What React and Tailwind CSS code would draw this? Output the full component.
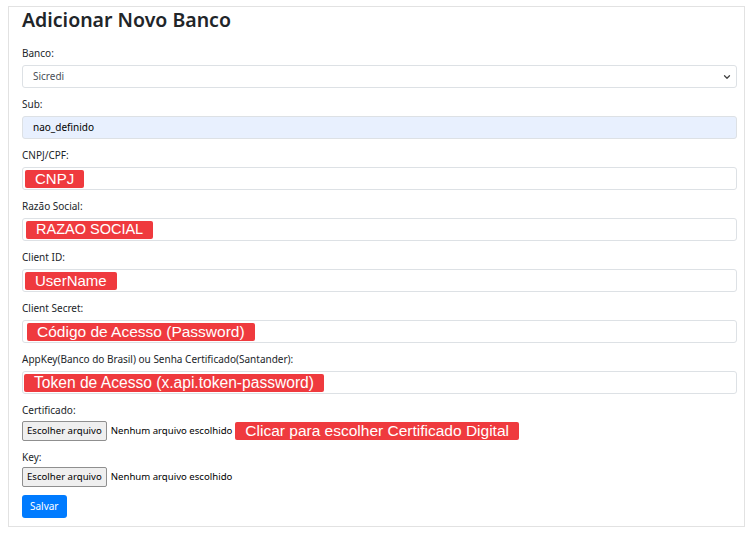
import { ChevronDown } from 'lucide-react';

// Formulário "Adicionar Novo Banco" com anotações em vermelho por cima dos campos
const fields = [
    { label: 'CNPJ/CPF:', note: 'CNPJ', cls: 'ml-[1px] text-[15px]' },
    { label: 'Razão Social:', note: 'RAZAO SOCIAL', cls: 'ml-[2px] text-[14.5px]' },
    { label: 'Client ID:', note: 'UserName', cls: 'ml-[1px] text-[15px]' },
    { label: 'Client Secret:', note: 'Código de Acesso (Password)', cls: 'ml-[3px] text-[15.5px]' },
    { label: 'AppKey(Banco do Brasil) ou Senha Certificado(Santander):', note: 'Token de Acesso (x.api.token-password)', cls: 'ml-0 text-[15.6px]' },
];

function Label({ children, className = 'mb-[4px]' }) {
    return <div className={`h-[16px] text-[10px] leading-[16px] text-[#212529] ${className}`}>{children}</div>;
}

function Note({ children, className = '' }) {
    return (
        <span
            className={`inline-flex items-center h-[18px] px-[10px] rounded-[2px] bg-[#ef3a3e] text-white leading-none whitespace-nowrap ${className}`}
            style={{ fontFamily: "'Liberation Sans', Arial, sans-serif" }}
        >
            {children}
        </span>
    );
}

function FilePicker({ children, className = 'mb-[8px]' }) {
    return (
        <div className={`flex items-center h-[20px] ${className}`}>
            <button className="h-[20px] px-[4px] border border-[#8f8f8f] rounded-[2px] bg-[#efefef] text-[9.6px] text-black leading-none">
                Escolher arquivo
            </button>
            <span className="ml-[4px] text-[9.6px] text-black">Nenhum arquivo escolhido</span>
            {children}
        </div>
    );
}

export default function App() {
    return (
        <div className="w-[753px] h-[535px] bg-white pt-[6px] pl-[8px]" style={{ fontFamily: "'Noto Sans', 'Open Sans', sans-serif" }}>
            <div className="w-[737px] h-[521px] border border-[#e2e2e2] pl-[13px] pr-[7px]">

                {/* Título */}
                <h1 className="h-[25px] mb-[13px] text-[19.5px] leading-[25px] font-semibold text-[#212529]">
                    Adicionar Novo Banco
                </h1>

                {/* Banco */}
                <Label>Banco:</Label>
                <div className="flex items-center justify-between h-[23px] mb-[8px] pl-[10px] pr-[4px] border border-[#dde1e5] rounded-[3px] text-[10px] text-[#495057]">
                    <span>Sicredi</span>
                    <ChevronDown size={10} strokeWidth={3} className="text-[#444]" />
                </div>

                {/* Sub */}
                <Label>Sub:</Label>
                <div className="flex items-center h-[23px] mb-[8px] pl-[10px] border border-[#dde1e5] rounded-[3px] bg-[#e8f0fe] text-[10px] text-black">
                    nao_definido
                </div>

                {fields.map(f => (
                    <div key={f.label}>
                        <Label>{f.label}</Label>
                        <div className="flex items-center h-[23px] mb-[8px] pl-[1px] border border-[#dde1e5] rounded-[3px]">
                            <Note className={f.cls}>{f.note}</Note>
                        </div>
                    </div>
                ))}

                {/* Certificado */}
                <Label className="mb-[3px]">Certificado:</Label>
                <FilePicker>
                    <Note className="ml-[3px] h-[17px] text-[15.5px]">Clicar para escolher Certificado Digital</Note>
                </FilePicker>

                {/* Key */}
                <Label className="mb-[2px]">Key:</Label>
                <FilePicker className="mb-[5px]" />

                <button className="h-[23px] px-[8px] rounded-[3px] bg-[#007bff] text-white text-[10px]">
                    Salvar
                </button>
            </div>
        </div>
    );
}
